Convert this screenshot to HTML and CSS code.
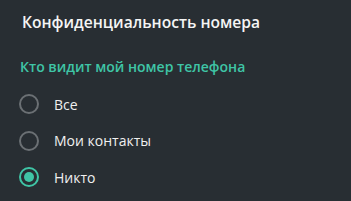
FILE: index.html
```html
<!DOCTYPE html>
<html lang="ru">
<head>
    <meta charset="UTF-8">
    <meta name="viewport" content="width=device-width, initial-scale=1.0">
    <title>Конфиденциальность номера</title>
    <link rel="stylesheet" href="styles.css">
</head>
<body>
    <div class="box">
        <h1 class="box-title">Конфиденциальность номера</h1>

        <div class="section-title">Кто видит мой номер телефона</div>

        <!-- options -->
        <div class="options">
            <label class="option">
                <span class="radio"></span>
                <span class="option-text">Все</span>
            </label>
            <label class="option">
                <span class="radio"></span>
                <span class="option-text">Мои контакты</span>
            </label>
            <label class="option checked">
                <span class="radio"></span>
                <span class="option-text">Никто</span>
            </label>
        </div>
    </div>
</body>
</html>
```

FILE: styles.css
```css
body {
    margin: 0;
    background-color: #282e33;
    font-family: 'Open Sans', sans-serif;
    color: #ffffff;
}

.box {
    padding: 11px 0 0 0;
}

.box-title {
    margin: 0 0 0 22px;
    font-size: 15.6px;
    font-weight: 600;
    line-height: 22px;
    color: #f5f5f5;
}

.section-title {
    margin: 24px 0 0 20px;
    font-size: 14px;
    font-weight: 600;
    line-height: 20px;
    color: #3fc5a6;
}

.options {
    display: flex;
    flex-direction: column;
    gap: 16.5px;
    margin-top: 17px;
    padding-left: 19px;
}

.option {
    display: flex;
    align-items: center;
    gap: 15px;
    height: 20px;
    font-size: 14px;
    cursor: pointer;
}

.radio {
    box-sizing: border-box;
    width: 20px;
    height: 20px;
    border: 2px solid #6b7074;
    border-radius: 50%;
    display: flex;
    justify-content: center;
    align-items: center;
}

.option.checked .radio {
    border-color: #3fc5a6;
}

.option.checked .radio::after {
    content: "";
    width: 10px;
    height: 10px;
    border-radius: 50%;
    background-color: #3fc5a6;
}

.option-text {
    color: #f0f0f0;
}
```
